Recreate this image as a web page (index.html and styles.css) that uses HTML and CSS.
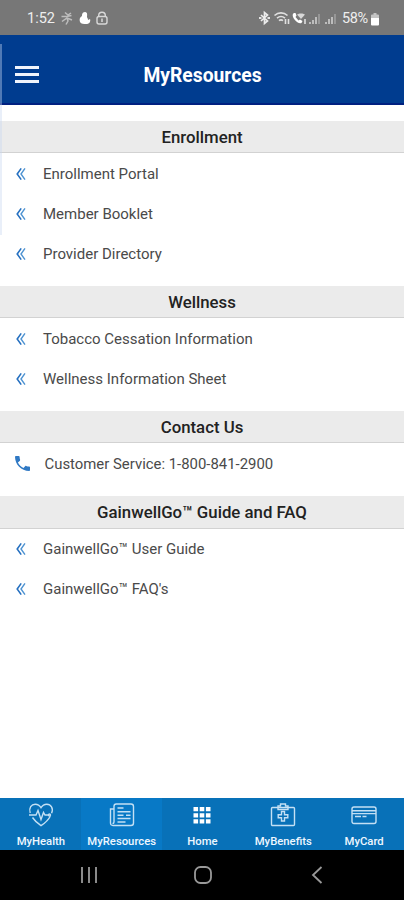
FILE: index.html
```html
<!DOCTYPE html>
<html lang="en">
<head>
  <meta charset="UTF-8">
  <meta name="viewport" content="width=device-width, initial-scale=1">
  <title>MyResources</title>
  <link rel="stylesheet" href="styles.css">
</head>
<body>

  <!-- shared icons -->
  <svg class="sprite" width="0" height="0">
    <symbol id="chevrons" viewBox="0 0 10 14">
      <path d="M5.2 1.4 1.2 7l4 5.6" fill="none" stroke="#2570c0" stroke-width="1.6"/>
      <path d="M9 1.4 5 7l4 5.6" fill="none" stroke="#4c92d2" stroke-width="1.4"/>
    </symbol>
  </svg>

  <div class="edge-handle"></div>

  <div class="status-bar">
    <span class="time">1:52</span>
    <svg class="status-left" width="50" height="16" viewBox="0 0 50 16" fill="none">
      <g stroke="#bdbdbd" stroke-width="1.5">
        <path d="M5 2.500 8 5l3-2M1.500 6.500h5l5-1M2 11.500l5-3.500 1 3-2 3.500M7 8l5 2"/>
      </g>
      <path d="M25 2c-3 0-3 3-3 4-2 1-3 3-2 6 1 2 4 2 6 2 3 0 5-2 4-5l-2 1c0-2-1-2-1-3s1-5-2-5z" fill="#fff"/>
      <path d="M38.700 7V5.500a3.300 3.300 0 0 1 6.600 0V7" stroke="#d8d8d8" stroke-width="1.400"/>
      <rect x="37" y="6.500" width="10" height="7.500" rx="2" stroke="#d8d8d8" stroke-width="1.400"/>
      <path d="M42 8.500v3.500" stroke="#d8d8d8" stroke-width="1.500"/>
    </svg>
    <svg class="status-right" width="80" height="16" viewBox="0 0 80 16" fill="none">
      <path d="m2 5 6.500 6L5.500 13.500v-11L8.500 5 2 11" stroke="#ececec" stroke-width="1.700"/>
      <path d="M0 8h2.500M8.500 8H11" stroke="#e4e4e4" stroke-width="1.800"/>
      <g stroke="#e0e0e0" stroke-width="1.600">
        <path d="M15.500 5.500c3.800-3.500 9.200-3.500 13 0M18 8.200c2.400-2 5.600-2 8 0M20 10.700c1.200-1 2.800-1 4 0"/>
        <path d="M26.500 9v5M29.500 9v5"/>
      </g>
      <path d="M35 3c-2 1-1.500 4 .500 6.500s5 4.500 7 3.500l1-2-2.500-1.500-1.500 1-3-3.500 1-1.500L36.500 3z" fill="#fff"/>
      <path d="M38 4.500c2-1.500 6-1.500 8 0L42 9z" fill="#d8d8d8"/>
      <path d="M46 9v5" stroke="#e0e0e0" stroke-width="1.600"/>
      <g fill="#bdbdbd">
        <path d="M50 12h2v2h-2zM53 10h2v4h-2zM56 7h2v7h-2z"/>
        <path d="M66 12h2v2h-2zM69 9h2v5h-2zM72 7h2v7h-2z"/>
      </g>
      <g fill="#979797">
        <path d="M59 4h2v10h-2zM75 4h2v10h-2z"/>
      </g>
    </svg>
    <span class="battery">58%</span>
    <svg class="battery-icon" width="8" height="13" viewBox="0 0 8 13">
      <path d="M2.500 0h3v1.500H7Q8 1.500 8 2.500V6H0V2.500Q0 1.500 1 1.500h1.500z" fill="#c4c4c4"/>
      <path d="M0 5h8v6.500Q8 12.500 7 12.500H1Q0 12.500 0 11.500z" fill="#fff"/>
    </svg>
  </div>

  <header class="app-header">
    <div class="menu">
      <span></span>
      <span></span>
      <span></span>
    </div>
    <h1>MyResources</h1>
  </header>

  <main>
    <section>
      <h2>Enrollment</h2>
      <ul>
        <li><svg class="chevrons"><use href="#chevrons"/></svg><span>Enrollment Portal</span></li>
        <li><svg class="chevrons"><use href="#chevrons"/></svg><span>Member Booklet</span></li>
        <li><svg class="chevrons"><use href="#chevrons"/></svg><span>Provider Directory</span></li>
      </ul>
    </section>

    <section>
      <h2>Wellness</h2>
      <ul>
        <li><svg class="chevrons"><use href="#chevrons"/></svg><span>Tobacco Cessation Information</span></li>
        <li><svg class="chevrons"><use href="#chevrons"/></svg><span>Wellness Information Sheet</span></li>
      </ul>
    </section>

    <section>
      <h2>Contact Us</h2>
      <ul>
        <li class="phone-row">
          <svg class="phone" viewBox="3 3 18 18"><path fill="#3079c4" d="M6.500 10.800c1.500 2.800 3.800 5.100 6.700 6.500l2.200-2.200c.3-.3.700-.4 1-.2 1.100.4 2.300.6 3.600.6.600 0 1 .4 1 1V20c0 .6-.4 1-1 1C10.600 21 3 13.400 3 4c0-.6.500-1 1-1h3.500c.6 0 1 .4 1 1 0 1.200.2 2.400.6 3.600.1.300 0 .7-.2 1z"/></svg>
          <span>Customer Service: 1-800-841-2900</span>
        </li>
      </ul>
    </section>

    <section>
      <h2>GainwellGo™ Guide and FAQ</h2>
      <ul>
        <li><svg class="chevrons"><use href="#chevrons"/></svg><span>GainwellGo™ User Guide</span></li>
        <li><svg class="chevrons"><use href="#chevrons"/></svg><span>GainwellGo™ FAQ's</span></li>
      </ul>
    </section>
  </main>

  <nav class="tabs">
    <div class="tab">
      <svg width="26" height="26" viewBox="0 0 26 26">
        <path d="M2.200 11C.5 6 3.500 2.200 7.200 2.200c2.500 0 4.500 1.300 5.800 3.500 1.300-2.200 3.300-3.500 5.800-3.500 4 0 7 4 4.800 9M4.500 15.500c2 3 5 5.800 8.500 8.200 4-2.700 7.500-6 9.300-9.500"/>
        <path d="M1 13h7l2-4.500 3 9 2.500-7 1.500 2.500h4"/>
        <circle cx="21.500" cy="13" r="1"/>
      </svg>
      <span>MyHealth</span>
    </div>
    <div class="tab active">
      <svg width="26" height="26" viewBox="0 0 26 26">
        <path d="M5 18V4.200q0-2.200 2.200-2.200H22q2.500 0 2.500 2.500v16.500q0 2.500-2.500 2.500H4q-2.500 0-2.500-2.500V7H5v13q0 1.500-1.500 1.500"/>
        <path d="M8.500 6h6M8.500 9.800h13M8.500 13.200h6M17 13.200h4.500M8.500 16.500h13M8.500 20h8"/>
      </svg>
      <span>MyResources</span>
    </div>
    <div class="tab">
      <svg class="grid-icon" width="26" height="26" viewBox="0 0 26 26">
        <path d="M4.500 5h4.600v4.300H4.500zM10.700 5h4.600v4.300h-4.600zM16.900 5h4.600v4.300h-4.600zM4.500 11.300h4.600v4.300H4.500zM10.700 11.300h4.600v4.300h-4.600zM16.900 11.300h4.600v4.300h-4.600zM4.500 17.300h4.600v4.300H4.500zM10.700 17.300h4.600v4.300h-4.600zM16.900 17.300h4.600v4.300h-4.600z"/>
      </svg>
      <span>Home</span>
    </div>
    <div class="tab">
      <svg width="26" height="26" viewBox="0 0 26 26">
        <rect x="1.500" y="5.500" width="23" height="18" rx="1"/>
        <path d="M8 7.500V4h2.500V2h5v2H18v3.500z"/>
        <path d="M11.500 9.500h3v3.300h3.300v3h-3.300V19h-3v-3.200H8.200v-3h3.300z"/>
      </svg>
      <span>MyBenefits</span>
    </div>
    <div class="tab">
      <svg width="26" height="26" viewBox="0 0 26 26">
        <rect x="1" y="5" width="24" height="16.500" rx="2"/>
        <path d="M1 8.800h24M1 11.600h24M4 14.500h6M11.500 14.500h4"/>
      </svg>
      <span>MyCard</span>
    </div>
  </nav>

  <div class="system-nav">
    <svg width="18" height="18" viewBox="0 0 18 18"><path d="M2 1v16M9 1v16M16 1v16"/></svg>
    <svg width="18" height="18" viewBox="0 0 18 18"><rect x="1" y="1" width="16" height="16" rx="5.500"/></svg>
    <svg width="18" height="18" viewBox="0 0 18 18"><path d="M13.500 1 5 9l8.500 8"/></svg>
  </div>

</body>
</html>
```

FILE: styles.css
```css
* {
  box-sizing: border-box;
}

body {
  margin: 0;
  height: 900px;
  display: flex;
  flex-direction: column;
  overflow: hidden;
  background: #fff;
  font-family: Roboto, "Liberation Sans", sans-serif;
  color: #4a4a4a;
}

.sprite {
  position: absolute;
}

/* side panel handle, floats over the page */
.edge-handle {
  position: absolute;
  top: 44px;
  left: 0;
  width: 2px;
  height: 191px;
  background: rgba(200, 215, 240, 0.4);
}

.status-bar {
  flex: none;
  display: flex;
  align-items: center;
  height: 35px;
  padding: 1px 25px 0 27px;
  background: #777;
  color: #eee;
  font-size: 14px;
}

.time {
  width: 33px;
  font-size: 14.5px;
}

.status-right {
  margin-left: auto;
}

.battery {
  margin-left: 3px;
  width: 29px;
  font-size: 14.5px;
  letter-spacing: -0.4px;
}

.battery-icon {
  margin-top: 2px;
}

.app-header {
  flex: none;
  display: flex;
  align-items: center;
  height: 69.5px;
  padding: 14px 15px 0;
  background: #003c8f;
  border-bottom: 2px solid #002080;
}

.menu {
  width: 24px;
  margin-top: -3px;
  display: flex;
  flex-direction: column;
  gap: 4px;
}

.menu span {
  height: 3px;
  background: #f0f4fc;
}

h1 {
  flex: 1;
  margin: 0 23px 0 0;
  text-align: center;
  font-size: 19.3px;
  font-weight: 700;
  color: #fff;
}

main {
  flex: 1;
  padding-top: 16px;
}

section {
  margin-bottom: 12.6px;
}

h2 {
  height: 32.6px;
  margin: 0;
  line-height: 33px;
  text-align: center;
  background: #ebebeb;
  border-bottom: 1px solid #d2d2d2;
  font-size: 16.8px;
  font-weight: 500;
  color: #222;
}

ul {
  margin: 0;
  padding: 0;
  list-style: none;
}

li {
  display: flex;
  align-items: center;
  height: 40px;
  padding: 1px 0 0 16px;
  font-size: 15px;
}

.chevrons {
  width: 10px;
  height: 14px;
  margin-right: 17px;
}

.phone {
  width: 15px;
  height: 15px;
  margin: 0 14.5px 0 -1px;
}

.phone-row {
  font-size: 14.9px;
}

.tabs {
  flex: none;
  display: grid;
  grid-template-columns: repeat(5, 1fr);
  height: 52px;
  background: #0871b8;
}

.tab {
  display: flex;
  flex-direction: column;
  align-items: center;
  padding: 4px 0 0 1px;
  color: #eef7ff;
  font-size: 11.3px;
  font-weight: 500;
}

.tab span {
  margin-top: 6px;
  line-height: 15px;
}

.tab.active {
  background: #0879c6;
}

.tab svg {
  fill: none;
  stroke: #c4e0f4;
  stroke-width: 1.4;
}

.tab .grid-icon {
  fill: #fff;
  stroke: none;
}

.system-nav {
  flex: none;
  display: flex;
  justify-content: center;
  align-items: center;
  gap: 96px;
  height: 50px;
  padding-left: 2px;
  background: #000;
}

.system-nav svg {
  fill: none;
  stroke: #999;
  stroke-width: 1.8;
}
```
